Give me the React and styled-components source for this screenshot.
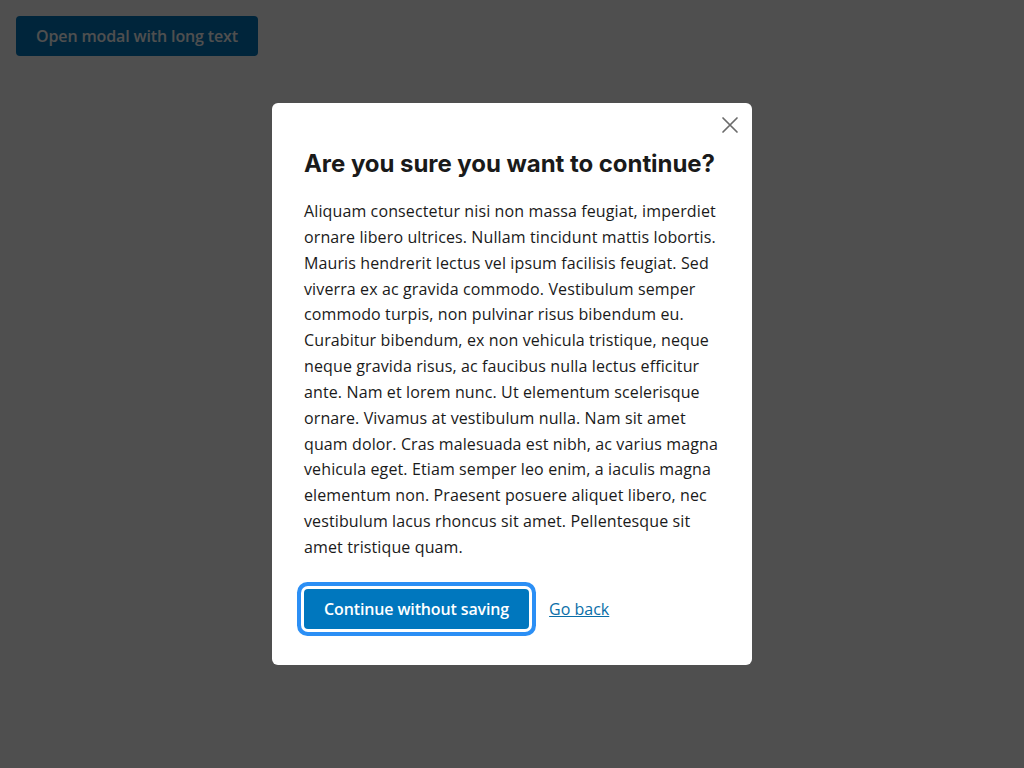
import React from "react";
import styled, { createGlobalStyle } from "styled-components";

const GlobalStyle = createGlobalStyle`
  * { box-sizing: border-box; }
  body {
    margin: 0;
    background: #fff;
    font-family: "Open Sans", "Liberation Sans", sans-serif;
    color: #1a1a1a;
  }
`;

const Page = styled.main`
  padding: 16px;
`;

const PrimaryButton = styled.button`
  height: 40px;
  padding: 0 20px;
  border: none;
  border-radius: 4px;
  background: #0077be;
  color: #fff;
  font-family: "Open Sans", "Liberation Sans", sans-serif;
  font-size: 16px;
  font-weight: 600;
  letter-spacing: -0.13px;
  cursor: pointer;
  box-shadow: ${(p) => (p.$focused ? "0 0 0 3px #fff, 0 0 0 7px #2b8ff5" : "none")};
`;

const Overlay = styled.div`
  position: fixed;
  inset: 0;
  background: rgba(0, 0, 0, 0.69);
  display: flex;
  justify-content: center;
  align-items: flex-start;
  padding-top: 103px;
`;

const Dialog = styled.div`
  position: relative;
  width: 480px;
  background: #fff;
  border-radius: 6px;
  padding: 45px 32px 36px;
`;

const CloseButton = styled.button`
  position: absolute;
  top: 10px;
  right: 10px;
  width: 24px;
  height: 24px;
  padding: 0;
  border: none;
  background: none;
  display: flex;
  align-items: center;
  justify-content: center;
  color: #6b6b6b;
  cursor: pointer;
`;

const Title = styled.h2`
  margin: 0 0 19px;
  font-family: Inter, "Open Sans", sans-serif;
  font-size: 24px;
  line-height: 32px;
  font-weight: 700;
  letter-spacing: -0.05px;
  color: #1a1a1a;
`;

const Body = styled.p`
  margin: 0;
  font-size: 16px;
  line-height: 25.85px;
  letter-spacing: 0.12px;
  color: #1a1a1a;
`;

const Actions = styled.div`
  display: flex;
  align-items: center;
  gap: 20px;
  margin-top: 28px;
`;

const Link = styled.a`
  color: #0a6ea8;
  font-size: 16px;
  text-decoration: underline;
  cursor: pointer;
`;

export default function App() {
  return (
    <>
      <GlobalStyle />
      <Page>
        <PrimaryButton>Open modal with long text</PrimaryButton>
      </Page>
      <Overlay>
        <Dialog role="dialog">
          <CloseButton aria-label="Close">
            <svg width="18" height="18" viewBox="0 0 18 18" fill="none" stroke="currentColor" strokeWidth="1.7" strokeLinecap="round">
              <path d="M2 2L16 16M16 2L2 16" />
            </svg>
          </CloseButton>
          <Title>Are you sure you want to continue?</Title>
          <Body>
            Aliquam consectetur nisi non massa feugiat, imperdiet ornare libero ultrices. Nullam tincidunt mattis lobortis. Mauris hendrerit lectus vel ipsum facilisis feugiat. Sed viverra ex ac gravida commodo. Vestibulum semper commodo turpis, non pulvinar risus bibendum eu. Curabitur bibendum, ex non vehicula tristique, neque neque gravida risus, ac faucibus nulla lectus efficitur ante. Nam et lorem nunc. Ut elementum scelerisque ornare. Vivamus at vestibulum nulla. Nam sit amet quam dolor. Cras malesuada est nibh, ac varius magna vehicula eget. Etiam semper leo enim, a iaculis magna elementum non. Praesent posuere aliquet libero, nec vestibulum lacus rhoncus sit amet. Pellentesque sit amet tristique quam.
          </Body>
          <Actions>
            <PrimaryButton $focused>Continue without saving</PrimaryButton>
            <Link>Go back</Link>
          </Actions>
        </Dialog>
      </Overlay>
    </>
  );
}
